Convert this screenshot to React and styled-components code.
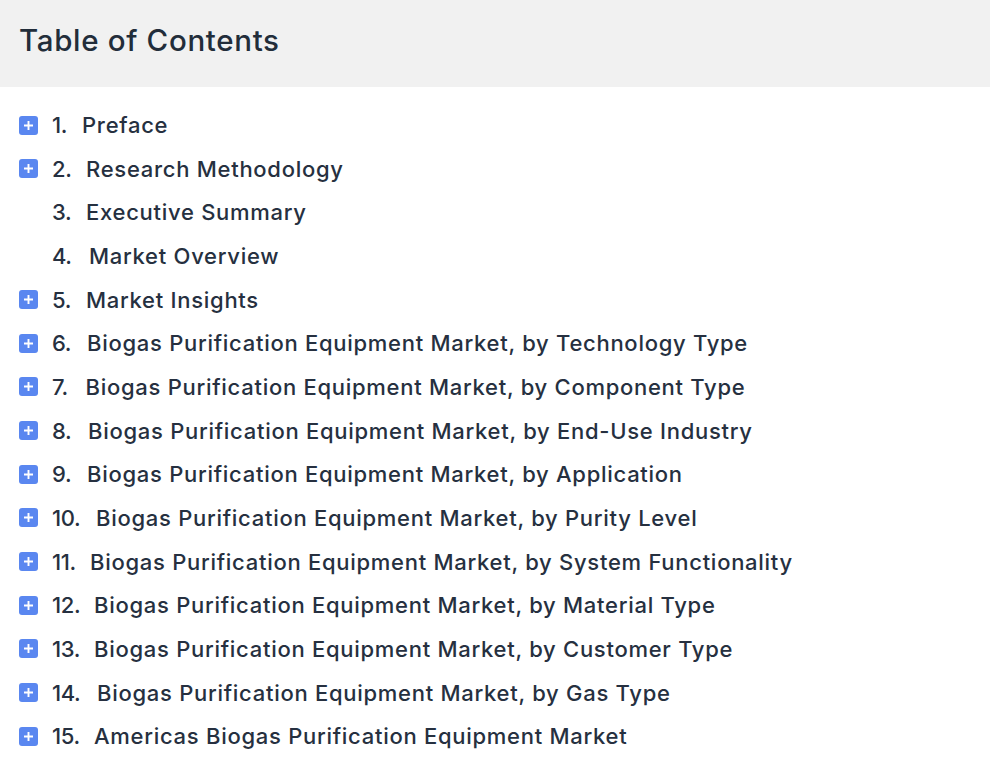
import React from 'react';
import styled, { createGlobalStyle } from 'styled-components';

const GlobalStyle = createGlobalStyle`
  html, body {
    margin: 0;
    padding: 0;
    background: #fff;
    font-family: Inter, "Open Sans", sans-serif;
    overflow: hidden;
  }
`;

const Header = styled.div`
  height: 87px;
  box-sizing: border-box;
  padding: 20px 19px 0;
  background: #f1f1f1;
`;

const Title = styled.h2`
  margin: 0;
  font-size: 29.5px;
  line-height: 40px;
  font-weight: 500;
  letter-spacing: 0.67px;
  color: #222d3a;
`;

const List = styled.ul`
  list-style: none;
  margin: 0;
  padding: 16.2px 0 0 19px;
`;

const Row = styled.li`
  display: flex;
  align-items: center;
  height: 43.67px;
  font-size: 22px;
  font-weight: 500;
  letter-spacing: 0.72px;
  color: #263040;
  white-space: nowrap;
`;

const Toggle = styled.span`
  flex: none;
  display: flex;
  align-items: center;
  justify-content: center;
  width: 19px;
  height: 19px;
  margin-right: 14px;
  border-radius: 3px;
  background: #5a87f0;
  visibility: ${p => (p.$hidden ? 'hidden' : 'visible')};
`;

const Num = styled.span`
  flex: none;
  width: ${p => p.$width}px;
  letter-spacing: -0.4px;
`;

const PlusIcon = () => (
  <svg width="11" height="11" viewBox="0 0 11 11">
    <path d="M5.5 1v9M1 5.5h9" stroke="#fff" strokeWidth="1.9" />
  </svg>
);

const sections = [
  [1, 30, 'Preface'],
  [2, 34, 'Research Methodology'],
  [3, 34, 'Executive Summary', true],
  [4, 37, 'Market Overview', true],
  [5, 34, 'Market Insights'],
  [6, 35, 'Biogas Purification Equipment Market, by Technology Type'],
  [7, 33.5, 'Biogas Purification Equipment Market, by Component Type'],
  [8, 36, 'Biogas Purification Equipment Market, by End-Use Industry'],
  [9, 35, 'Biogas Purification Equipment Market, by Application'],
  [10, 44, 'Biogas Purification Equipment Market, by Purity Level'],
  [11, 38, 'Biogas Purification Equipment Market, by System Functionality'],
  [12, 42, 'Biogas Purification Equipment Market, by Material Type'],
  [13, 42, 'Biogas Purification Equipment Market, by Customer Type'],
  [14, 45, 'Biogas Purification Equipment Market, by Gas Type'],
  [15, 42, 'Americas Biogas Purification Equipment Market']
];

const App = () => {
  return (
    <div>
      <GlobalStyle />
      <Header>
        <Title>Table of Contents</Title>
      </Header>
      <List>
        {sections.map(([n, width, label, noToggle]) => (
          <Row key={n}>
            <Toggle $hidden={noToggle}>
              <PlusIcon />
            </Toggle>
            <Num $width={width}>{n}.</Num>
            <span>{label}</span>
          </Row>
        ))}
      </List>
    </div>
  );
};

export default App;
